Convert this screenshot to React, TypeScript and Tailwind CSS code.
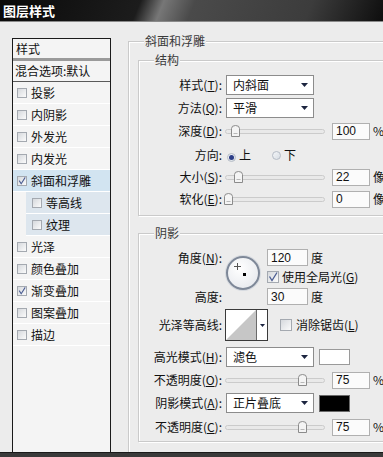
import React from 'react';

function Check({ checked = false, big = false }: { checked?: boolean; big?: boolean }) {
  return (
    <span
      className={`relative inline-flex shrink-0 border border-[#a4a9b0] bg-gradient-to-br from-[#d6d9dd] to-[#fbfbfb] ${
        big ? 'w-[12px] h-[12px]' : 'w-[10px] h-[10px]'
      }`}
    >
      {checked && (
        <svg viewBox="0 0 10 10" className="absolute inset-0 w-full h-full">
          <path d="M1.5 4.5 L4 8.5 L9 0.5" fill="none" stroke="#4b5d93" strokeWidth="1.3" />
        </svg>
      )}
    </span>
  );
}

function Radio({ checked = false }: { checked?: boolean }) {
  return (
    <span className="inline-flex w-[9px] h-[9px] shrink-0 items-center justify-center rounded-full border border-[#b5bcc6] bg-gradient-to-br from-[#f4f6f8] to-[#d8dde4]">
      {checked && <span className="w-[5px] h-[5px] rounded-full bg-[#2c3d86]" />}
    </span>
  );
}

function Arrow() {
  return (
    <svg width="7" height="4" viewBox="0 0 7 4">
      <path d="M0 0 H7 L3.5 4 Z" fill="#1c2540" />
    </svg>
  );
}

function Select({ value }: { value: string }) {
  return (
    <div className="flex h-[20px] w-[88px] shrink-0 items-center justify-between border border-[#8c8c8c] bg-white pl-[6px] pr-[5px] text-[12px] leading-none">
      <span>{value}</span>
      <Arrow />
    </div>
  );
}

function Num({ value, w = 'w-[38px]' }: { value: string; w?: string }) {
  return (
    <div className={`flex h-[17px] ${w} shrink-0 items-center border border-[#b0b0b0] bg-[#fbfbfb] pl-[3px] text-[12px] leading-none font-['Liberation_Sans',sans-serif]`}>
      {value}
    </div>
  );
}

function Slider({ at }: { at: number }) {
  return (
    <div className="relative h-[14px] w-[102px] shrink-0">
      <div className="absolute left-[2px] right-0 top-[5px] h-[5px] rounded-full border border-[#cbcbcb] bg-[#e9e9e9]" />
      <svg width="9" height="12" viewBox="0 0 9 12" className="absolute top-[1px]" style={{ left: at - 4.5 }}>
        <path d="M0.5 11.5 V3.5 Q0.5 0.5 4.5 0.5 Q8.5 0.5 8.5 3.5 V11.5 Z" fill="#f4f4f4" stroke="#8b8b8b" />
        <path d="M2.5 8.5 H6.5" stroke="#b8b8b8" />
      </svg>
    </div>
  );
}

function Label({ children }: { children: React.ReactNode }) {
  return <div className="w-[83px] shrink-0 text-right text-[12px] leading-none">{children}</div>;
}

function Group({ title, className, children }: { title: string; className: string; children: React.ReactNode }) {
  return (
    <div className={`relative border border-[#cacaca] shadow-[inset_1px_1px_0_#ffffff,1px_1px_0_#ffffff] ${className}`}>
      <span className="absolute -top-[8px] left-[15px] bg-[#ececec] px-[1px] text-[12px] leading-[14px] text-[#3a3a3a]">
        {title}
      </span>
      {children}
    </div>
  );
}

const items = [
  { t: '投影' },
  { t: '内阴影' },
  { t: '外发光' },
  { t: '内发光' },
  { t: '斜面和浮雕', checked: true, active: true },
  { t: '等高线', sub: true },
  { t: '纹理', sub: true },
  { t: '光泽' },
  { t: '颜色叠加' },
  { t: '渐变叠加', checked: true },
  { t: '图案叠加' },
  { t: '描边' },
];

export default function App() {
  return (
    <div className="flex h-[457px] w-[383px] flex-col overflow-hidden bg-[#ececec] text-[#111] font-['Noto_Sans_CJK_SC','Noto_Sans',sans-serif]">
      {/* title bar */}
      <div className="flex h-[22px] shrink-0 items-center border-b border-[#8a8a8a] bg-[linear-gradient(112deg,#0a0a0a_0%,#1c1c1c_36%,#777777_42%,#4a4a4a_50%,#3c3c3c_80%,#0e0e0e_100%)] pl-[3px]">
        <span className="text-[13px] font-bold leading-none text-white [text-shadow:0_0_2px_#000]">图层样式</span>
      </div>

      <div className="flex min-h-0 flex-1 overflow-hidden">
        {/* left list */}
        <div className="ml-[12px] mt-[16px] flex w-[99px] shrink-0 flex-col border-x border-t border-[#1a1a1a] bg-[#f4f4f4] text-[12px] leading-none">
          <div className="flex h-[22px] items-center border-b-[3px] border-[#9a9a9a] pl-[3px]">样式</div>
          <div className="flex h-[21px] items-center border-b border-[#5a5a5a] pl-[2px]">混合选项:默认</div>
          {items.map((it) => (
            <div
              key={it.t}
              className={`flex h-[22px] items-center border-b border-white ${it.active ? 'bg-[#d2e4f1]' : ''} ${
                it.sub ? 'ml-[13px] bg-[#dde6ee] pl-[6px]' : 'pl-[4px]'
              }`}
            >
              <Check checked={it.checked} />
              <span className="ml-[4px]">{it.t}</span>
            </div>
          ))}
        </div>

        {/* right settings */}
        <Group title="斜面和浮雕" className="ml-[17px] mt-[19px] h-[430px] w-[280px] shrink-0 pl-[9px]">
          <Group title="结构" className="mt-[18px] w-[290px] pb-[7px] pt-[14px]">
            <div className="flex h-[20px] items-center">
              <Label>
                样式(<u>T</u>):
              </Label>
              <div className="ml-[4px]">
                <Select value="内斜面" />
              </div>
            </div>
            <div className="mt-[3px] flex h-[20px] items-center">
              <Label>
                方法(<u>Q</u>):
              </Label>
              <div className="ml-[4px]">
                <Select value="平滑" />
              </div>
            </div>
            <div className="mt-[4px] flex h-[18px] items-center">
              <Label>
                深度(<u>D</u>):
              </Label>
              <div className="ml-[1px]">
                <Slider at={12} />
              </div>
              <div className="ml-[7px]">
                <Num value="100" />
              </div>
              <span className="ml-[3px] text-[12px]">%</span>
            </div>
            <div className="mt-[6px] flex h-[18px] items-center text-[12px] leading-none">
              <Label>方向:</Label>
              <span className="ml-[5px]">
                <Radio checked />
              </span>
              <span className="ml-[3px]">上</span>
              <span className="ml-[21px]">
                <Radio />
              </span>
              <span className="ml-[3px]">下</span>
            </div>
            <div className="mt-[4px] flex h-[18px] items-center">
              <Label>
                大小(<u>S</u>):
              </Label>
              <div className="ml-[1px]">
                <Slider at={15} />
              </div>
              <div className="ml-[7px]">
                <Num value="22" />
              </div>
              <span className="ml-[3px] text-[12px]">像素</span>
            </div>
            <div className="mt-[4px] flex h-[18px] items-center">
              <Label>
                软化(<u>E</u>):
              </Label>
              <div className="ml-[1px]">
                <Slider at={5} />
              </div>
              <div className="ml-[7px]">
                <Num value="0" />
              </div>
              <span className="ml-[3px] text-[12px]">像素</span>
            </div>
          </Group>

          <Group title="阴影" className="mt-[17px] w-[290px] pb-[5px] pt-[15px]">
            <div className="flex h-[57px] text-[12px] leading-none">
              <div className="flex w-[83px] shrink-0 flex-col items-end">
                <div className="flex h-[18px] items-center">
                  角度(<u>N</u>):
                </div>
                <div className="mt-[21px] flex h-[18px] items-center">高度:</div>
              </div>
              <div className="relative ml-[4px] mt-[7px] h-[34px] w-[34px] shrink-0 rounded-full border-2 border-[#7e8898] bg-[radial-gradient(circle_at_40%_35%,#ffffff,#e2e5ea)] shadow-[0_0_0_1px_#d6dae0]">
                <span className="absolute left-[15px] top-[15px] h-[3px] w-[3px] bg-black" />
                <svg width="7" height="7" viewBox="0 0 7 7" className="absolute left-[6px] top-[5px]">
                  <path d="M3.5 0 V7 M0 3.5 H7" stroke="#555" strokeWidth="1" />
                </svg>
              </div>
              <div className="ml-[7px] flex flex-col">
                <div className="flex h-[17px] items-center">
                  <Num value="120" w="w-[41px]" />
                  <span className="ml-[3px]">度</span>
                </div>
                <div className="flex h-[21px] items-center">
                  <Check checked big />
                  <span className="ml-[3px]">
                    使用全局光(<u>G</u>)
                  </span>
                </div>
                <div className="mt-[1px] flex h-[17px] items-center">
                  <Num value="30" w="w-[41px]" />
                  <span className="ml-[3px]">度</span>
                </div>
              </div>
            </div>

            <div className="mt-[3px] flex h-[32px] items-center text-[12px] leading-none">
              <Label>光泽等高线:</Label>
              <div className="ml-[3px] flex h-[32px] w-[43px] shrink-0 border border-[#3a3a3a] bg-white">
                <svg width="30" height="30" viewBox="0 0 30 30" className="shrink-0">
                  <path d="M0 30 L30 0 V30 Z" fill="#c6c6c6" />
                </svg>
                <div className="flex flex-1 items-center justify-center border-l border-[#6a6a6a]">
                  <svg width="5" height="3" viewBox="0 0 5 3">
                    <path d="M0 0 H5 L2.5 3 Z" fill="#1c2540" />
                  </svg>
                </div>
              </div>
              <span className="ml-[12px]">
                <Check big />
              </span>
              <span className="ml-[4px]">
                消除锯齿(<u>L</u>)
              </span>
            </div>

            <div className="mt-[6px] flex h-[20px] items-center">
              <Label>
                高光模式(<u>H</u>):
              </Label>
              <div className="ml-[4px]">
                <Select value="滤色" />
              </div>
              <div className="ml-[5px] h-[16px] w-[31px] shrink-0 border border-[#9a9a9a] bg-white" />
            </div>
            <div className="mt-[4px] flex h-[18px] items-center">
              <Label>
                不透明度(<u>O</u>):
              </Label>
              <div className="ml-[1px]">
                <Slider at={79} />
              </div>
              <div className="ml-[7px]">
                <Num value="75" />
              </div>
              <span className="ml-[3px] text-[12px]">%</span>
            </div>
            <div className="mt-[4px] flex h-[20px] items-center">
              <Label>
                阴影模式(<u>A</u>):
              </Label>
              <div className="ml-[4px]">
                <Select value="正片叠底" />
              </div>
              <div className="ml-[5px] h-[17px] w-[31px] shrink-0 border border-[#6a6a6a] bg-black" />
            </div>
            <div className="mt-[5px] flex h-[18px] items-center">
              <Label>
                不透明度(<u>C</u>):
              </Label>
              <div className="ml-[1px]">
                <Slider at={79} />
              </div>
              <div className="ml-[7px]">
                <Num value="75" />
              </div>
              <span className="ml-[3px] text-[12px]">%</span>
            </div>
          </Group>
        </Group>
      </div>

      <div className="h-[5px] shrink-0 border-t border-[#1a1a1a] bg-[#3a3a3a]" />
    </div>
  );
}
